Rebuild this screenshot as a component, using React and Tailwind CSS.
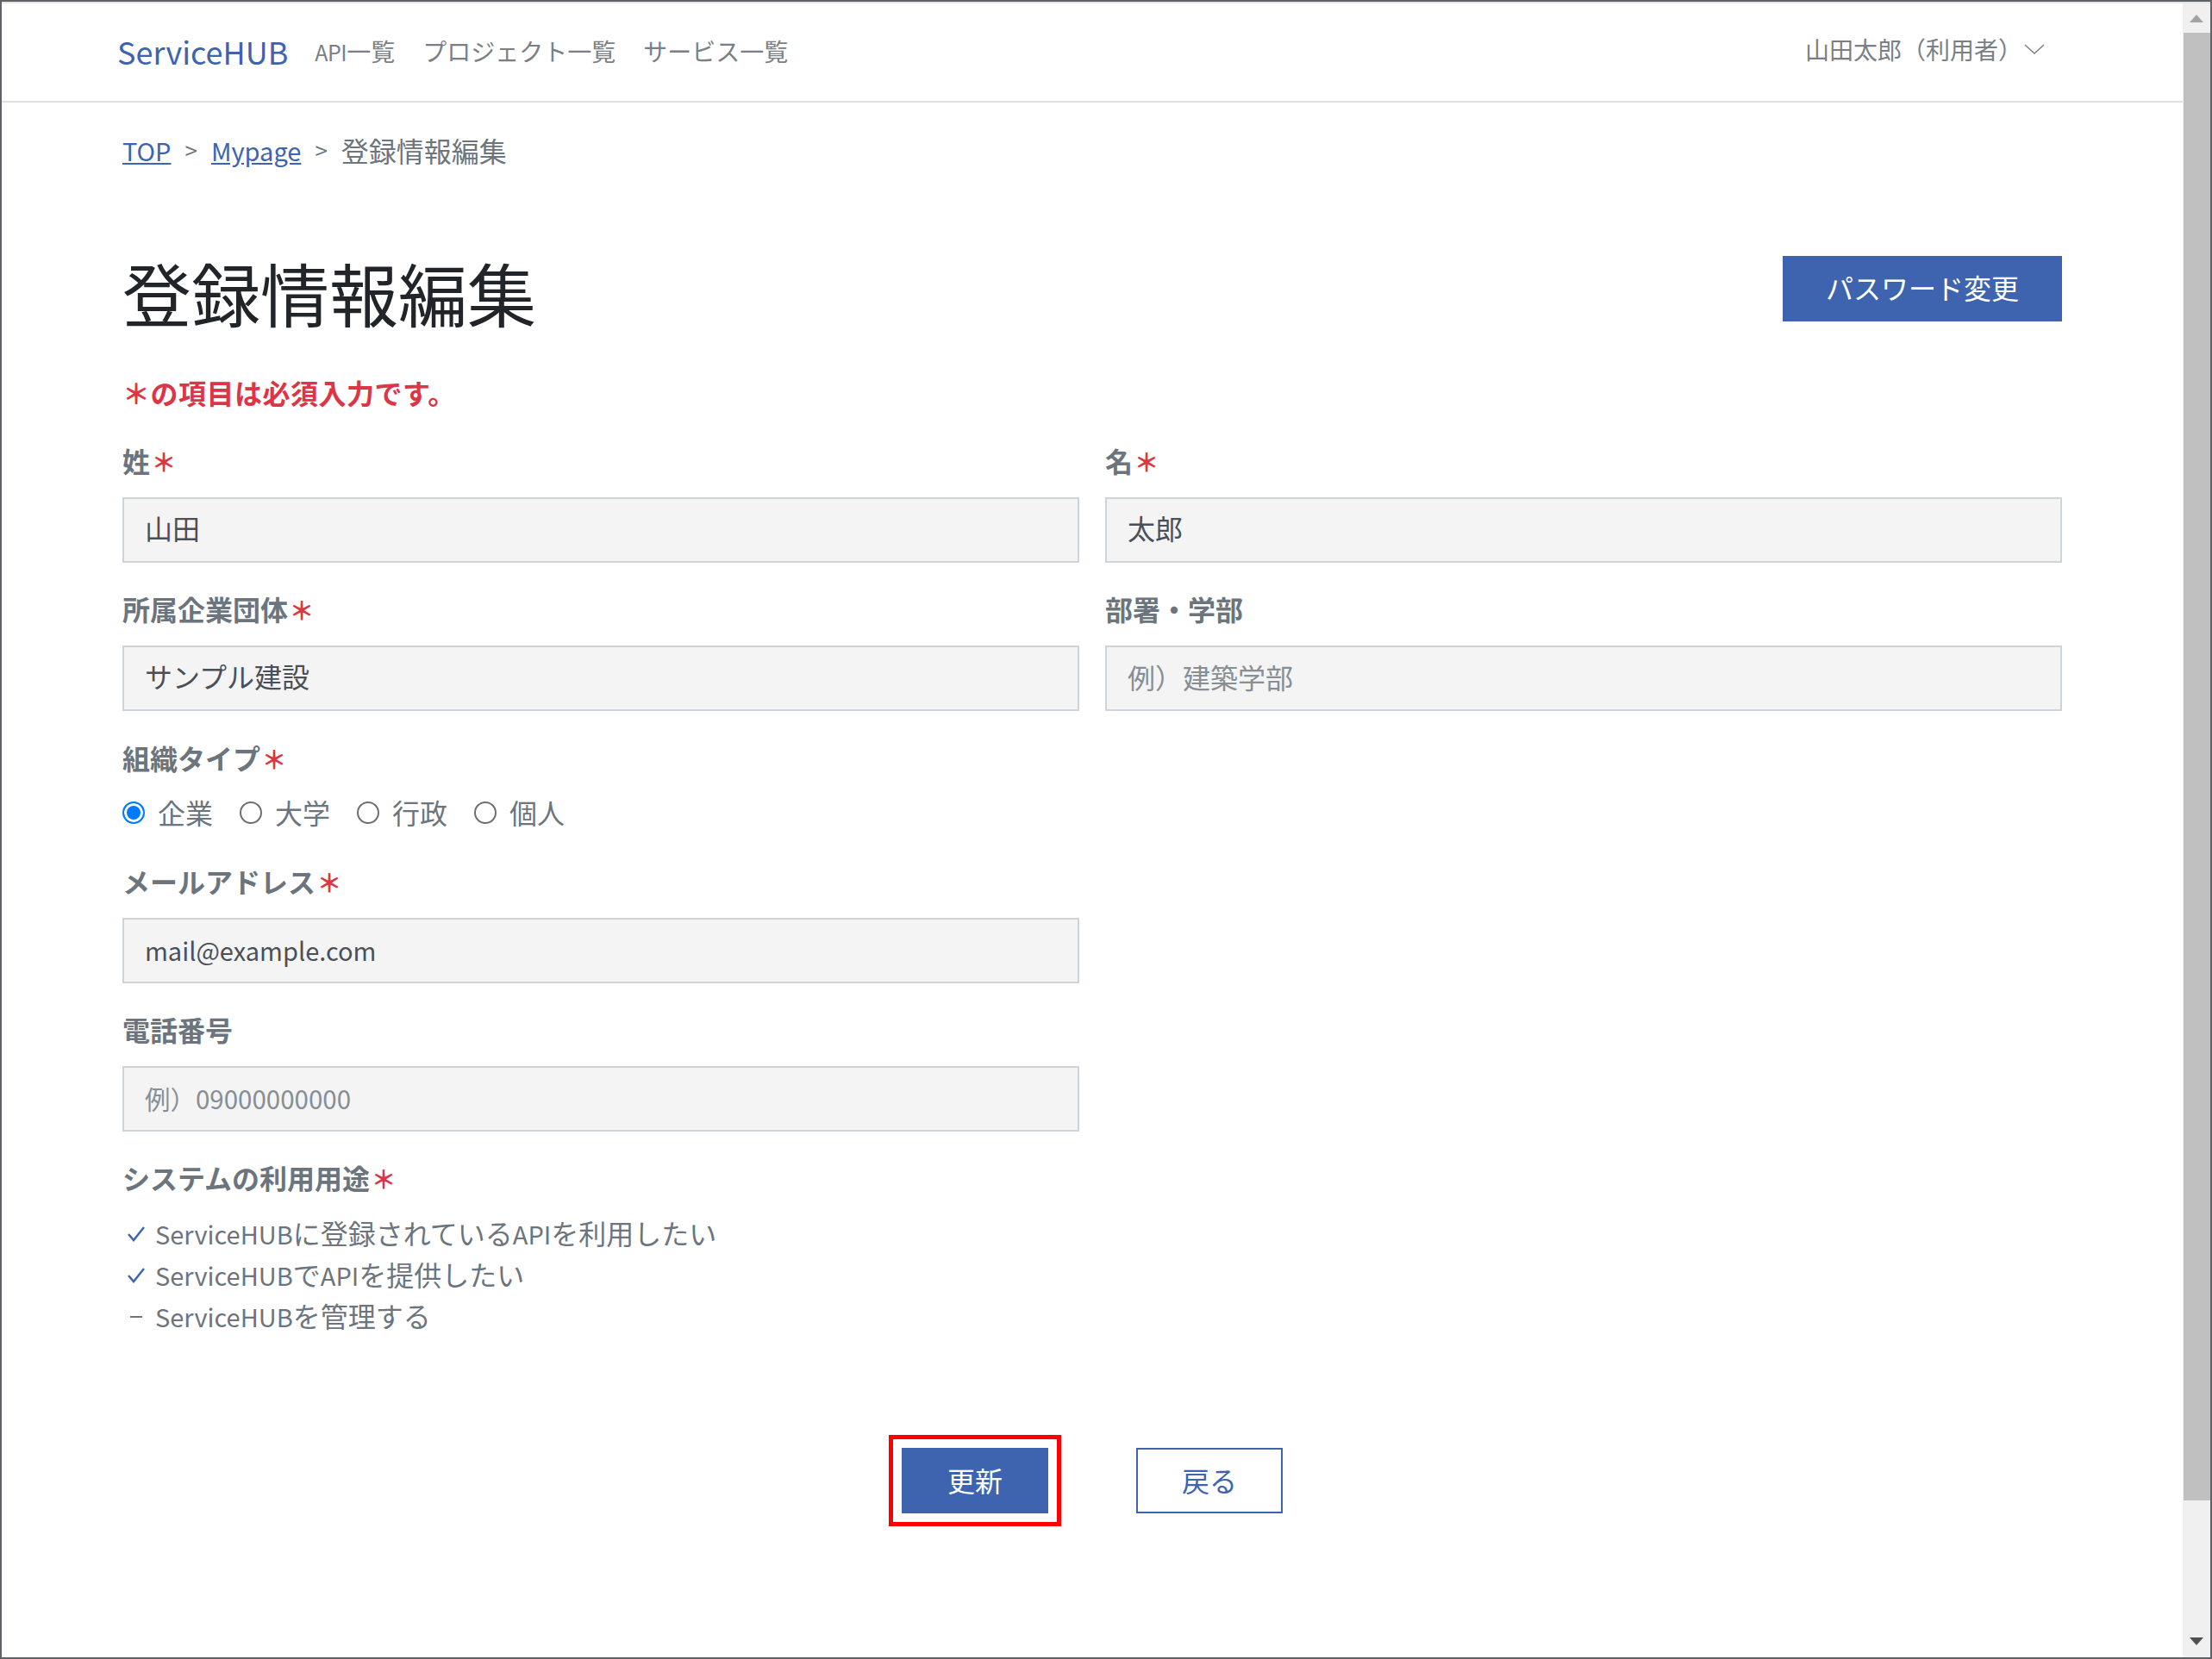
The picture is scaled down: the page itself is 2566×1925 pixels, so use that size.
import React from 'react';

const font = 'font-["Noto_Sans_CJK_JP","Noto_Sans",sans-serif]';

const Req = () => <span className="inline-block w-[32px] text-center font-bold text-[29px] leading-none text-[#dc3545]">＊</span>;

// Latin runs sit a little smaller than the kana next to them
const Latin = ({ children, className = 'text-[29px]' }) => <span className={className}>{children}</span>;

const Label = ({ children, required }) => (
  <label className="block font-bold text-[32px] leading-[48px] text-[#6c757d] mb-[19px]">
    {children}
    {required && <Req />}
  </label>
);

const Field = ({ label, required, value, placeholder, className = 'text-[32px]' }) => (
  <div>
    <Label required={required}>{label}</Label>
    <input
      type="text"
      defaultValue={value}
      placeholder={placeholder}
      className={`block w-full h-[76px] px-[24px] bg-[#f4f4f4] border-2 border-[#ced4da] text-[#495057] placeholder:text-[#868e96] outline-none ${className}`}
    />
  </div>
);

const Check = () => (
  <svg viewBox="0 0 20 18" className="w-[20px] h-[18px] mt-[3px] shrink-0" fill="none" stroke="#3e64b0" strokeWidth="2.5">
    <path d="M1 9l6 7L19 1" />
  </svg>
);

const Dash = () => (
  <svg viewBox="0 0 20 18" className="w-[20px] h-[18px] mt-[3px] shrink-0" fill="none" stroke="#6c757d" strokeWidth="2">
    <path d="M3 9h14" />
  </svg>
);

const organizationTypes = ['企業', '大学', '行政', '個人'];

export default function App() {
  return (
    <div className={`${font} w-[2566px] h-[1925px] flex bg-white border-2 border-[#5f6368] overflow-hidden`}>
      <div className="flex-1 min-w-0 flex flex-col border-t-2 border-[#e6e6e6]">
        {/* Navbar */}
        <header className="h-[115px] shrink-0 flex items-center justify-between pl-[134px] pr-[160px] border-b-2 border-[#dee2e6]">
          <nav className="flex items-center -mt-[4px]">
            <a className="text-[36px] leading-[54px] text-[#3e64b0] mr-[31px]">ServiceHUB</a>
            <div className="flex items-center gap-[32px] text-[28px] text-[#7a7f85]">
              <a><Latin className="text-[25px] tracking-[-0.5px]">API</Latin>一覧</a>
              <a>プロジェクト一覧</a>
              <a>サービス一覧</a>
            </div>
          </nav>
          <div className="flex items-center gap-[2px] text-[28px] text-[#7a7f85] -mt-[8px]">
            <span>山田太郎（利用者）</span>
            <svg viewBox="0 0 24 12" className="w-[24px] h-[12px]" fill="none" stroke="#7a7f85" strokeWidth="1.5">
              <path d="M1 1l11 10L23 1" />
            </svg>
          </div>
        </header>

        <main className="flex-1 px-[140px]">
          {/* Breadcrumb */}
          <div className="mt-[31px] flex items-center h-[48px] text-[32px] leading-[48px] text-[#6c757d]">
            <a className="underline text-[29px] text-[#3e64b0]">TOP</a>
            <span className="mx-[16px] text-[26px]">&gt;</span>
            <a className="underline text-[29px] text-[#3e64b0]">Mypage</a>
            <span className="mx-[16px] text-[26px]">&gt;</span>
            <span>登録情報編集</span>
          </div>

          {/* Title */}
          <div className="mt-[99px] flex items-start justify-between">
            <h1 className="text-[80px] leading-[120px] text-[#212529] -mt-[19px]">登録情報編集</h1>
            <button className="w-[324px] h-[76px] pb-[4px] bg-[#3e64b0] text-white text-[32px]">パスワード変更</button>
          </div>

          <p className="mt-[33px] font-bold text-[32px] leading-[48px] tracking-[0.5px] text-[#dc3545]">＊の項目は必須入力です。</p>

          {/* Form */}
          <form className="mt-[31px]">
            <div className="grid grid-cols-2 gap-x-[30px] gap-y-[29px]">
              <Field label="姓" required value="山田" className="text-[32px] pb-[6px]" />
              <Field label="名" required value="太郎" className="text-[32px] pb-[6px]" />
              <Field label="所属企業団体" required value="サンプル建設" className="text-[32px] pb-[6px]" />
              <Field label="部署・学部" placeholder="例）建築学部" className="text-[32px] pb-[5px]" />
            </div>

            <div className="mt-[30px]">
              <label className="block font-bold text-[32px] leading-[48px] text-[#6c757d]">
                組織タイプ
                <Req />
              </label>
              <div className="mt-[17px] flex items-center gap-[31px]">
                {organizationTypes.map((type, i) => (
                  <label key={type} className="flex items-center gap-[15px] text-[32px] leading-[48px] text-[#6c757d]">
                    <input
                      type="radio"
                      name="organizationType"
                      defaultChecked={i === 0}
                      className="appearance-none w-[26px] h-[26px] m-0 rounded-full border-2 border-[#6f6f6f] checked:border-[#007bff] checked:bg-[#007bff] checked:shadow-[inset_0_0_0_3px_white]"
                    />
                    <span className="-mt-[2px]">{type}</span>
                  </label>
                ))}
              </div>
            </div>

            <div className="mt-[32px] grid grid-cols-2 gap-x-[30px] gap-y-[29px]">
              <Field label="メールアドレス" required value="mail@example.com" className="text-[29px] pb-[2px]" />
              <div />
              <Field label="電話番号" placeholder="例）09000000000" className="text-[29.5px] pb-[2px]" />
            </div>

            <div className="mt-[29px]">
              <label className="block font-bold text-[32px] leading-[48px] text-[#6c757d]">
                システムの利用用途
                <Req />
              </label>
              <ul className="mt-[16px] text-[32px] text-[#6c757d]">
                <li className="flex items-center h-[48px] pl-[6px] gap-[12px]">
                  <Check />
                  <span><Latin>ServiceHUB</Latin>に登録されている<Latin>API</Latin>を利用したい</span>
                </li>
                <li className="flex items-center h-[48px] pl-[6px] gap-[12px]">
                  <Check />
                  <span><Latin>ServiceHUB</Latin>で<Latin>API</Latin>を提供したい</span>
                </li>
                <li className="flex items-center h-[48px] pl-[6px] gap-[12px]">
                  <Dash />
                  <span><Latin>ServiceHUB</Latin>を管理する</span>
                </li>
              </ul>
            </div>

            <div className="mt-[130px] flex justify-center gap-[102px]">
              <button type="button" className="w-[170px] h-[76px] pb-[3px] bg-[#3e64b0] text-white text-[32px] outline-[5px] outline-[#ff0000] outline-offset-[10px]">
                更新
              </button>
              <button type="button" className="w-[170px] h-[76px] pb-[3px] bg-white border-2 border-[#3e64b0] text-[#3e64b0] text-[32px]">
                戻る
              </button>
            </div>
          </form>
        </main>
      </div>

      {/* Scrollbar */}
      <aside className="w-[32px] shrink-0 flex flex-col bg-[#f0f0f0] border-t-2 border-[#e6e6e6]">
        <div className="h-[34px] flex items-center justify-center">
          <div className="w-0 h-0 border-x-[8px] border-x-transparent border-b-[9px] border-b-[#a3a3a3]" />
        </div>
        <div className="h-[1703px] bg-[#c0c0c0] ml-[1px]" />
        <div className="flex-1 flex items-end justify-center pb-[14px]">
          <div className="w-0 h-0 border-x-[8px] border-x-transparent border-t-[9px] border-t-[#505050]" />
        </div>
      </aside>
    </div>
  );
}
